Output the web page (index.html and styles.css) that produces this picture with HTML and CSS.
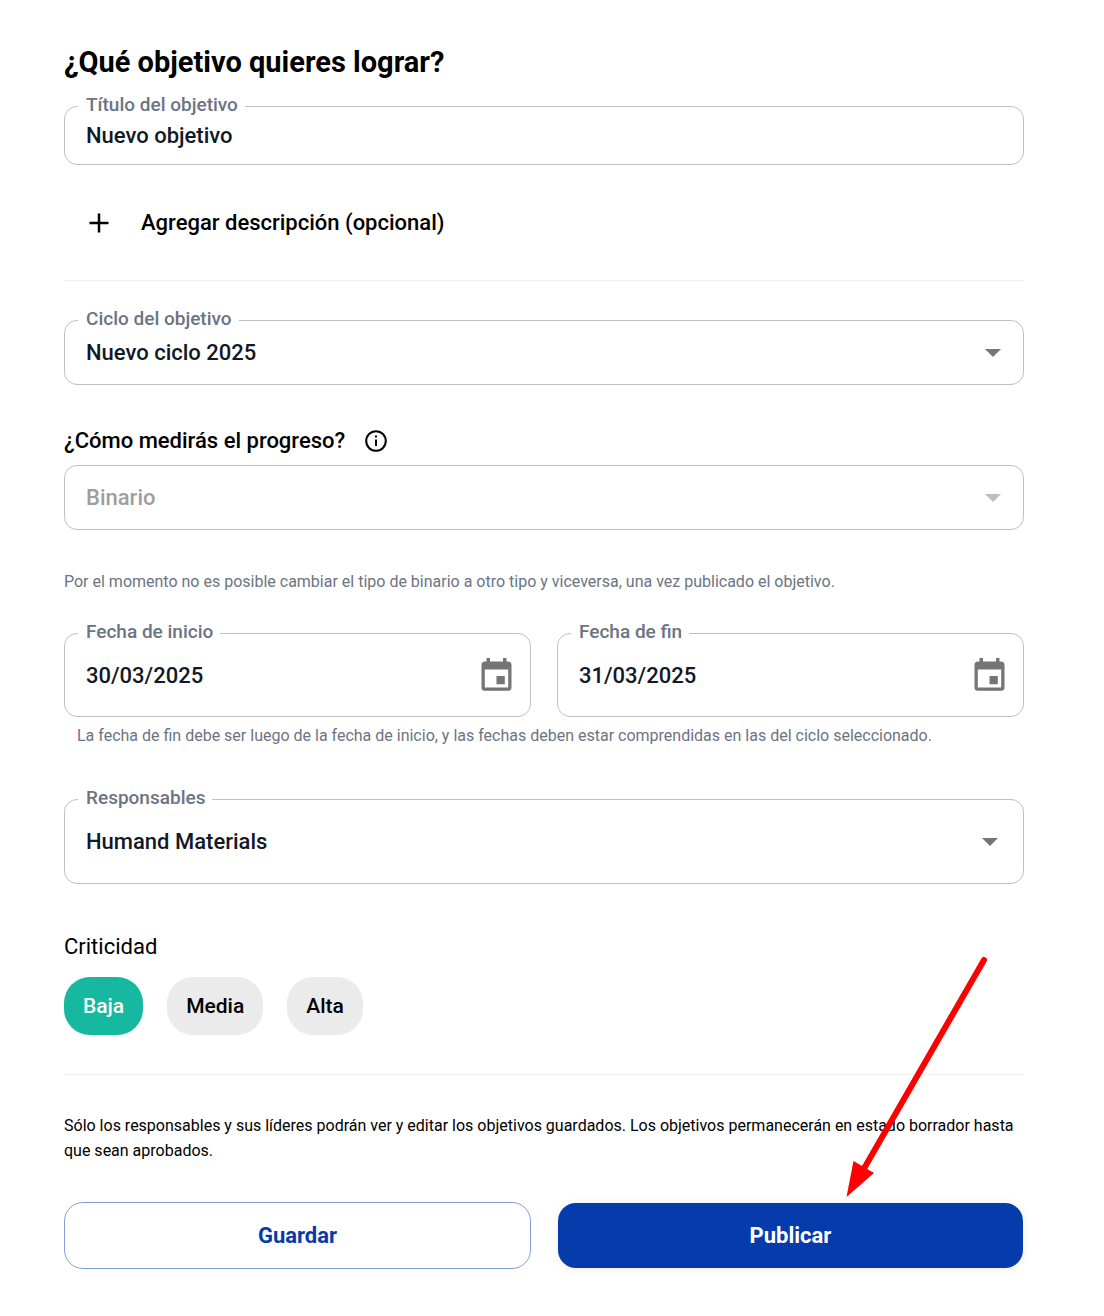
FILE: index.html
```html
<!DOCTYPE html>
<html lang="es">
<head>
<meta charset="utf-8">
<meta name="viewport" content="width=device-width, initial-scale=1">
<title>Nuevo objetivo</title>
<link rel="stylesheet" href="styles.css">
</head>
<body>
<form class="goal-form">
  <h1 class="title">¿Qué objetivo quieres lograr?</h1>

  <div class="field field-compact">
    <label class="field-label" for="goal-title">Título del objetivo</label>
    <input class="control" id="goal-title" type="text" value="Nuevo objetivo">
  </div>

  <button class="add-button" type="button">
    <svg class="add-icon" viewBox="0 0 20 20" aria-hidden="true"><path d="M10 .5v19M.5 10h19"/></svg>
    Agregar descripción (opcional)
  </button>

  <hr class="divider">

  <div class="field field-medium">
    <label class="field-label" for="cycle">Ciclo del objetivo</label>
    <select class="control" id="cycle"><option>Nuevo ciclo 2025</option></select>
    <svg class="caret" viewBox="0 0 16 8" aria-hidden="true"><path d="M0 0h16L8 8z"/></svg>
  </div>

  <div class="question">
    <label for="measure">¿Cómo medirás el progreso?</label>
    <svg class="info-icon" viewBox="0 0 22 22" aria-hidden="true"><circle cx="11" cy="11" r="9.8"/><path d="M11 9.600v6.400M11 5.600v2"/></svg>
  </div>
  <div class="field field-medium">
    <select class="control" id="measure" disabled><option>Binario</option></select>
    <svg class="caret caret-disabled" viewBox="0 0 16 8" aria-hidden="true"><path d="M0 0h16L8 8z"/></svg>
  </div>
  <p class="hint">Por el momento no es posible cambiar el tipo de binario a otro tipo y viceversa, una vez publicado el objetivo.</p>

  <div class="columns">
    <div class="field field-large">
      <label class="field-label" for="start">Fecha de inicio</label>
      <input class="control" id="start" type="text" value="30/03/2025">
      <button class="date-button" type="button" aria-label="Elegir fecha de inicio">
        <svg class="date-icon" viewBox="0 0 30 33" aria-hidden="true"><path fill-rule="evenodd" d="M5 0h3.500v3.500h13V0H25v3.500h1.500A3.500 3.500 0 0 1 30 7v22.500a3.300 3.300 0 0 1-3.300 3.300H3.300A3.300 3.300 0 0 1 0 29.500V7a3.500 3.500 0 0 1 3.500-3.500H5zM3.300 11.500v18h23.400v-18zM15 18h8.300v8.300H15z"/></svg>
      </button>
    </div>
    <div class="field field-large">
      <label class="field-label" for="end">Fecha de fin</label>
      <input class="control" id="end" type="text" value="31/03/2025">
      <button class="date-button" type="button" aria-label="Elegir fecha de fin">
        <svg class="date-icon" viewBox="0 0 30 33" aria-hidden="true"><path fill-rule="evenodd" d="M5 0h3.500v3.500h13V0H25v3.500h1.500A3.500 3.500 0 0 1 30 7v22.500a3.300 3.300 0 0 1-3.300 3.300H3.300A3.300 3.300 0 0 1 0 29.500V7a3.500 3.500 0 0 1 3.500-3.500H5zM3.300 11.500v18h23.400v-18zM15 18h8.300v8.300H15z"/></svg>
      </button>
    </div>
  </div>
  <p class="hint hint-dates">La fecha de fin debe ser luego de la fecha de inicio, y las fechas deben estar comprendidas en las del ciclo seleccionado.</p>

  <div class="field field-autocomplete">
    <label class="field-label" for="owners">Responsables</label>
    <select class="control" id="owners"><option>Humand Materials</option></select>
    <svg class="caret" viewBox="0 0 16 8" aria-hidden="true"><path d="M0 0h16L8 8z"/></svg>
  </div>

  <h2 class="subtitle" id="criticality">Criticidad</h2>
  <div class="chips" role="group" aria-labelledby="criticality">
    <button class="chip chip-selected" type="button" aria-pressed="true">Baja</button>
    <button class="chip" type="button" aria-pressed="false">Media</button>
    <button class="chip" type="button" aria-pressed="false">Alta</button>
  </div>

  <hr class="divider">

  <p class="notice">Sólo los responsables y sus líderes podrán ver y editar los objetivos guardados. Los objetivos permanecerán en estado borrador hasta que sean aprobados.</p>

  <div class="columns actions">
    <button class="action action-outline" type="button">Guardar</button>
    <button class="action action-primary" type="submit">Publicar</button>
    <svg class="arrow" viewBox="0 0 150 247" aria-hidden="true"><path class="arrow-line" d="M144 10L22 222"/><path class="arrow-head" d="M6.500 247L13.500 211L34 223z"/></svg>
  </div>
</form>
</body>
</html>
```
FILE: styles.css
```css
* {
  box-sizing: border-box;
}

body {
  margin: 0;
  background: #fff;
  color: #000;
  font-family: Roboto, "Liberation Sans", sans-serif;
}

button,
input,
select {
  font-family: inherit;
}

.goal-form {
  padding: 44px 80px 47px 64px;
}

.title {
  margin: 0 0 26px;
  font-size: 29px;
  line-height: 36px;
  font-weight: 700;
}

.field {
  position: relative;
  display: flex;
  align-items: center;
  border: 1px solid #c0c0c0;
  border-radius: 13px;
}

.field-compact {
  height: 59px;
}

.field-medium {
  height: 65px;
}

.field-large {
  height: 84px;
}

.field-autocomplete {
  height: 85px;
}

/* The label sits over the top border and hides the part behind it. */
.field-label {
  position: absolute;
  top: -14px;
  left: 13px;
  padding: 0 7px 0 8px;
  background: #fff;
  color: #6b7483;
  font-size: 19px;
  line-height: 24px;
  font-weight: 500;
}

.control {
  flex: 1;
  min-width: 0;
  height: 100%;
  margin: 0;
  padding: 0 21px;
  border: 0;
  border-radius: 12px;
  background: transparent;
  color: #111827;
  font-size: 22px;
  font-weight: 500;
  line-height: 28px;
  appearance: none;
}

.control:disabled {
  color: #9e9e9e;
  opacity: 1;
}

.caret {
  position: absolute;
  right: 22px;
  width: 16px;
  height: 8px;
  fill: #757575;
  pointer-events: none;
}

.caret-disabled {
  fill: #bdbdbd;
}

.field-autocomplete .caret {
  right: 25px;
}

.add-button {
  display: flex;
  align-items: center;
  gap: 32px;
  margin: 40px 0 39px;
  padding: 4px 25px;
  border: 0;
  background: none;
  color: #000;
  font-size: 22px;
  line-height: 28px;
  font-weight: 500;
}

.add-icon {
  width: 20px;
  height: 20px;
  fill: none;
  stroke: #000;
  stroke-width: 2.5;
}

.divider {
  height: 1px;
  margin: 39px 0;
  border: 0;
  background: #f0f0f0;
}

.question {
  display: flex;
  align-items: center;
  gap: 20px;
  margin: 42px 0 10px;
  font-size: 22px;
  line-height: 28px;
  font-weight: 500;
}

.info-icon {
  width: 22px;
  height: 22px;
  fill: none;
  stroke: #000;
  stroke-width: 2;
}

.hint {
  margin: 39px 0;
  color: #6b7483;
  font-size: 16px;
  line-height: 25px;
}

.hint-dates {
  margin: 6px 13px 51px;
}

.columns {
  display: grid;
  grid-template-columns: 1fr 1fr;
  gap: 26px;
}

.date-button {
  display: flex;
  margin-right: 18px;
  padding: 0 0 2px;
  border: 0;
  background: none;
}

.date-icon {
  width: 31px;
  height: 33px;
  fill: #757575;
}

.subtitle {
  margin: 49px 0 16px;
  font-size: 22px;
  line-height: 28px;
  font-weight: 400;
}

.chips {
  display: flex;
  gap: 24px;
}

.chip {
  height: 58px;
  padding: 0 19px;
  border: 0;
  border-radius: 26px;
  background: #ebebeb;
  color: #000;
  font-size: 21px;
  font-weight: 500;
}

.chip-selected {
  background: #17b8a0;
  color: #fff;
}

.chips + .divider {
  margin-bottom: 38px;
}

.notice {
  margin: 0 0 39px;
  font-size: 16px;
  line-height: 25px;
}

.actions {
  position: relative;
}

.action {
  height: 67px;
  border: 1px solid transparent;
  border-radius: 19px;
  font-size: 22px;
  font-weight: 700;
}

.action-outline {
  border-color: #839ddb;
  background: #fff;
  color: #053bab;
}

.action-primary {
  background: #053bab;
  background-clip: padding-box;
  color: #fff;
  box-shadow: 0 1px 8px rgba(0, 0, 0, 0.06);
}

.arrow {
  position: absolute;
  right: 34px;
  bottom: 72px;
  width: 150px;
  height: 247px;
  pointer-events: none;
}

.arrow-line {
  fill: none;
  stroke: #f00;
  stroke-width: 6;
  stroke-linecap: round;
}

.arrow-head {
  fill: #f00;
}
```
